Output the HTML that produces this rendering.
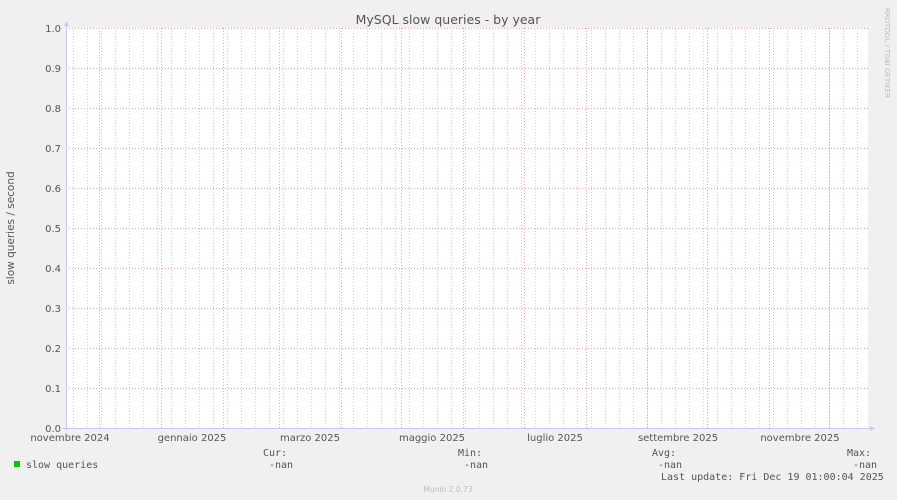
<!DOCTYPE html>
<html><head><meta charset="utf-8"><style>
body{margin:0;width:897px;height:500px;background:#f0f0f0;overflow:hidden;font-family:"DejaVu Sans","Liberation Sans",sans-serif;}
</style></head><body>
<svg width="897" height="500" xmlns="http://www.w3.org/2000/svg" style="position:absolute;left:0;top:0">
<defs>
<pattern id="wk" x="73" y="0" width="14" height="500" patternUnits="userSpaceOnUse">
<line x1="0.5" y1="0" x2="0.5" y2="500" stroke="#d0d0d0" stroke-width="1" stroke-dasharray="1,2"/>
</pattern>
</defs>
<rect x="66" y="28" width="802" height="400" fill="#fff"/>
<rect x="67" y="28" width="801" height="400" fill="url(#wk)"/>
<g stroke="#e4a8a8" stroke-width="1" stroke-dasharray="1,2">
<line x1="66" y1="28.5" x2="868" y2="28.5"/><line x1="66" y1="68.5" x2="868" y2="68.5"/>
<line x1="66" y1="108.5" x2="868" y2="108.5"/><line x1="66" y1="148.5" x2="868" y2="148.5"/>
<line x1="66" y1="188.5" x2="868" y2="188.5"/><line x1="66" y1="228.5" x2="868" y2="228.5"/>
<line x1="66" y1="268.5" x2="868" y2="268.5"/><line x1="66" y1="308.5" x2="868" y2="308.5"/>
<line x1="66" y1="348.5" x2="868" y2="348.5"/><line x1="66" y1="388.5" x2="868" y2="388.5"/>
<line x1="99.5" y1="28" x2="99.5" y2="428"/><line x1="161.5" y1="28" x2="161.5" y2="428"/>
<line x1="223.5" y1="28" x2="223.5" y2="428"/><line x1="279.5" y1="28" x2="279.5" y2="428"/>
<line x1="341.5" y1="28" x2="341.5" y2="428"/><line x1="401.5" y1="28" x2="401.5" y2="428"/>
<line x1="463.5" y1="28" x2="463.5" y2="428"/><line x1="524.5" y1="28" x2="524.5" y2="428"/>
<line x1="586.5" y1="28" x2="586.5" y2="428"/><line x1="647.5" y1="28" x2="647.5" y2="428"/>
<line x1="707.5" y1="28" x2="707.5" y2="428"/><line x1="769.5" y1="28" x2="769.5" y2="428"/>
<line x1="829.5" y1="28" x2="829.5" y2="428"/>
</g>
<g stroke="#c8c8f0" stroke-width="1">
<line x1="66.5" y1="24" x2="66.5" y2="430"/>
<line x1="62" y1="428.5" x2="872" y2="428.5"/>
</g>
<polygon points="64,26 69,26 66.5,21" fill="#c8c8f0"/>
<polygon points="870,426 870,431 875,428.5" fill="#c8c8f0"/>
<g fill="#555" font-size="10" text-anchor="end">
<text x="61" y="32">1.0</text><text x="61" y="72">0.9</text><text x="61" y="112">0.8</text>
<text x="61" y="152">0.7</text><text x="61" y="192">0.6</text><text x="61" y="232">0.5</text>
<text x="61" y="272">0.4</text><text x="61" y="312">0.3</text><text x="61" y="352">0.2</text>
<text x="61" y="392">0.1</text><text x="61" y="432">0.0</text>
</g>
<g fill="#555" font-size="10" text-anchor="middle">
<text x="70" y="441">novembre 2024</text><text x="192" y="441">gennaio 2025</text>
<text x="310" y="441">marzo 2025</text><text x="432" y="441">maggio 2025</text>
<text x="555" y="441">luglio 2025</text><text x="678" y="441">settembre 2025</text>
<text x="800" y="441">novembre 2025</text>
</g>
<text x="448" y="24" fill="#555" font-size="12.5" text-anchor="middle">MySQL slow queries - by year</text>
<text transform="translate(14,228) rotate(-90)" fill="#555" font-size="10.5" text-anchor="middle">slow queries / second</text>
<text transform="translate(885,53) rotate(90)" fill="#bbb" font-size="7" text-anchor="middle">RRDTOOL / TOBI OETIKER</text>
<rect x="14" y="461" width="6" height="6" fill="#00cc00"/>
<g fill="#555" font-size="10" font-family="DejaVu Sans Mono,Liberation Mono,monospace">
<text x="26" y="468">slow queries</text>
<text x="263" y="456">Cur:</text><text x="269" y="468">-nan</text>
<text x="458" y="456">Min:</text><text x="464" y="468">-nan</text>
<text x="652" y="456">Avg:</text><text x="658" y="468">-nan</text>
<text x="847" y="456">Max:</text><text x="853" y="468">-nan</text>
<text x="661" y="480">Last update: Fri Dec 19 01:00:04 2025</text>
</g>
<text x="448" y="492" fill="#bbb" font-size="7.5" text-anchor="middle">Munin 2.0.73</text>
</svg>
</body></html>
